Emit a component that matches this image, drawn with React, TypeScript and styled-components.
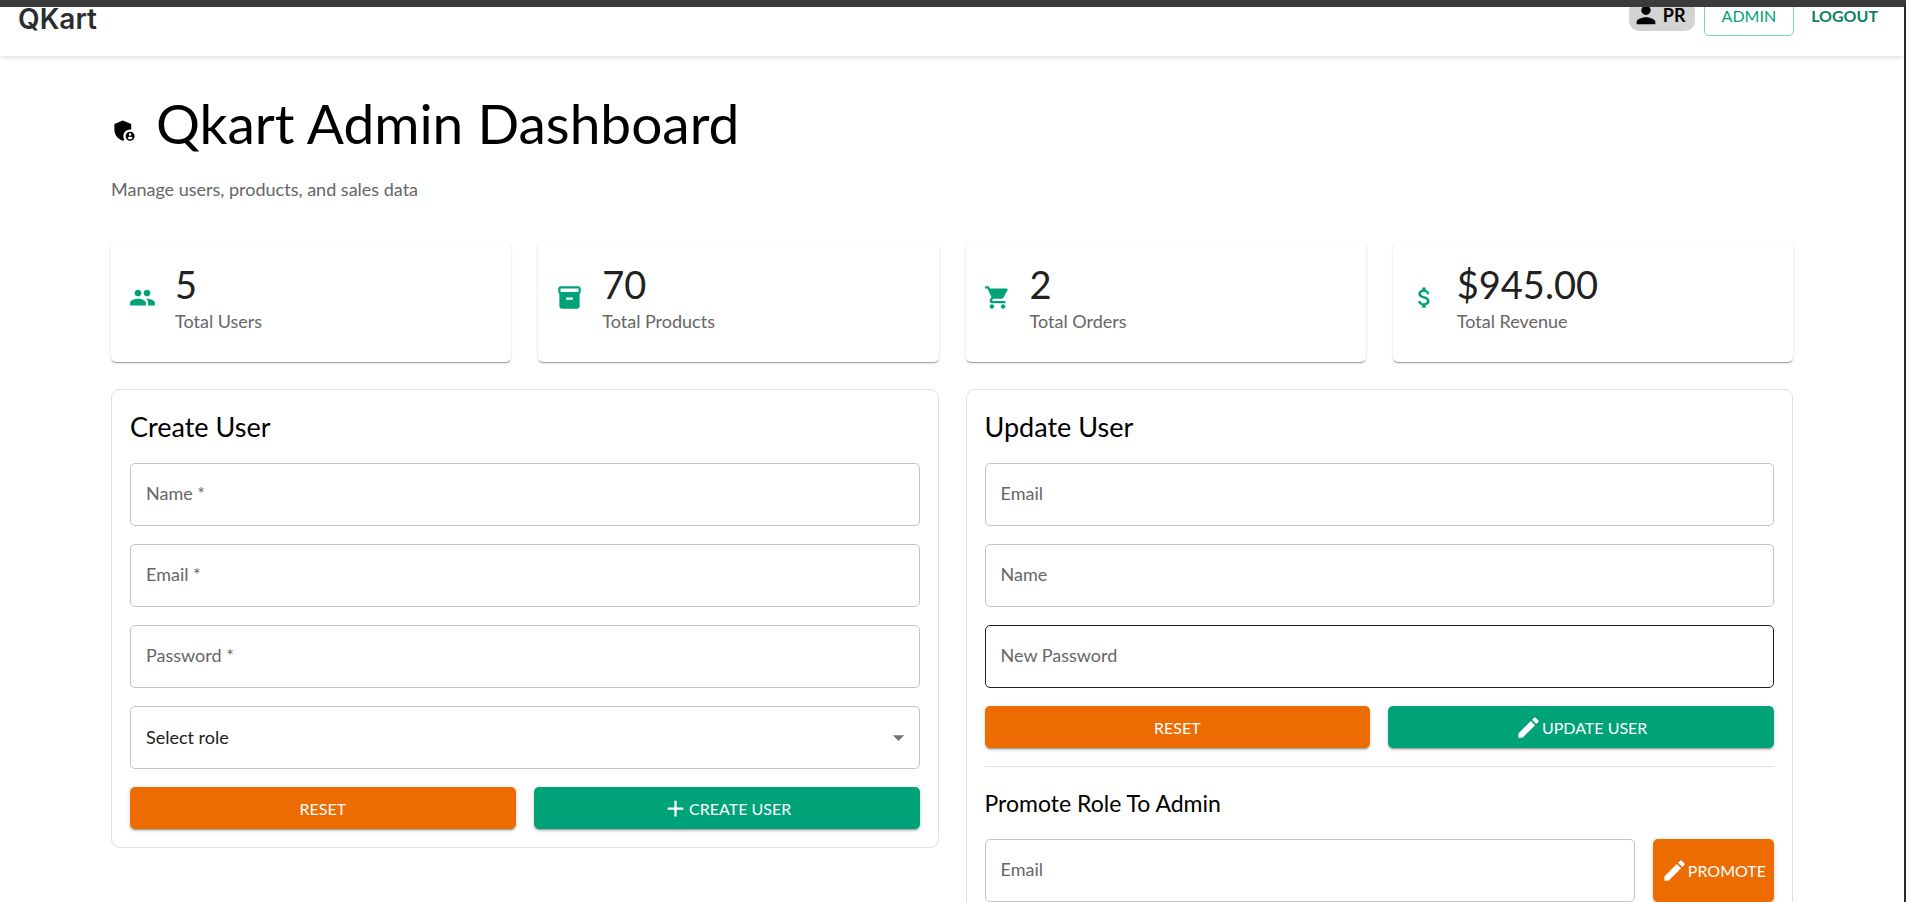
import React, { useId } from "react";
import styled, { createGlobalStyle } from "styled-components";
import type { IconType } from "react-icons";
import {
  MdAdd,
  MdAdminPanelSettings,
  MdArrowDropDown,
  MdAttachMoney,
  MdEdit,
  MdInventory2,
  MdPeople,
  MdPerson,
  MdShoppingCart,
} from "react-icons/md";

const green = "#00a278";
const orange = "#ed6c02";

const GlobalStyle = createGlobalStyle`
  *, *::before, *::after { box-sizing: border-box; }
  body {
    margin: 0;
    background: #fff;
    color: #000;
    font-family: Lato, "Liberation Sans", sans-serif;
    font-size: 18px;
    line-height: 27px;
  }
  h1, h2, h3, p { margin: 0; font-weight: 400; }
  button, input, select { font: inherit; margin: 0; }
  svg { flex: none; display: block; }
`;

const Viewport = styled.div`
  height: 100vh;
  overflow: hidden;
  border-top: 7px solid #3b3b3b;
  border-right: 2px solid #2b2b2b;
`;

/* The page is scrolled a little, so the header starts above the viewport. */
const Header = styled.header`
  display: flex;
  align-items: center;
  justify-content: space-between;
  height: 80px;
  margin-top: -31px;
  padding: 0 18px 2px;
  box-shadow: 0 1px 5px rgba(0, 0, 0, 0.16);
`;

const Logo = styled.a`
  padding-top: 8px;
  color: #2a2d31;
  font-family: Inter, sans-serif;
  font-size: 28px;
  font-weight: 600;
  text-decoration: none;
`;

const HeaderActions = styled.div`
  display: flex;
  align-items: center;
  gap: 9px;
`;

const UserChip = styled.div`
  display: flex;
  align-items: center;
  gap: 3px;
  height: 31px;
  padding: 0 9px 0 3px;
  border-radius: 10px;
  background: #d3d3d3;
  font-weight: 700;
`;

const HeaderButton = styled.button<{ $outlined?: boolean }>`
  height: 42px;
  padding: 0 ${(p) => (p.$outlined ? 17 : 8)}px;
  border: ${(p) => (p.$outlined ? "1px solid #7fd0bb" : "0")};
  border-radius: 5px;
  background: transparent;
  color: ${(p) => (p.$outlined ? green : "#0b8361")};
  font-size: 16px;
  font-weight: ${(p) => (p.$outlined ? 400 : 700)};
  text-transform: uppercase;
`;

const Main = styled.main`
  display: flex;
  flex-direction: column;
  gap: 27px;
  width: calc(100% - 54px);
  max-width: 1682px;
  margin: 0 auto;
  padding-top: 36px;
`;

const Intro = styled.div`
  display: flex;
  flex-direction: column;
  gap: 21px;
  padding-bottom: 12px;
`;

const PageTitle = styled.h1`
  display: flex;
  align-items: baseline;
  gap: 18px;
  font-size: 55px;
  line-height: 63px;
`;

const Muted = styled.p`
  color: #666;
`;

const Stats = styled.section`
  display: grid;
  grid-template-columns: repeat(4, 1fr);
  gap: 27px;
`;

const StatCard = styled.article`
  display: flex;
  align-items: center;
  gap: 19px;
  padding: 18px 18px 27px;
  border-radius: 5px;
  box-shadow: 0 2px 1px -1px rgba(0, 0, 0, 0.2), 0 1px 1px rgba(0, 0, 0, 0.14),
    0 1px 3px rgba(0, 0, 0, 0.12);
`;

const StatValue = styled.p`
  color: #212121;
  font-size: 38px;
  line-height: 48px;
`;

const Panels = styled.div`
  display: grid;
  grid-template-columns: 1fr 1fr;
  align-items: start;
  gap: 27px;
`;

const Panel = styled.section`
  display: flex;
  flex-direction: column;
  gap: 18px;
  padding: 18px;
  border: 1px solid #e0e0e0;
  border-radius: 9px;
`;

const PanelTitle = styled.h2`
  font-size: 27px;
  line-height: 37px;
`;

const SubTitle = styled.h3`
  font-size: 23px;
  line-height: 36px;
`;

const FieldBox = styled.div`
  position: relative;
  flex: 1;
  color: #212121;
`;

const FieldLabel = styled.label`
  position: absolute;
  top: 17px;
  left: 16px;
  color: #666;
  line-height: 26px;
  pointer-events: none;
`;

const Input = styled.input<{ $active?: boolean }>`
  display: block;
  width: 100%;
  height: 63px;
  padding: 0 15px;
  border: 1px solid ${(p) => (p.$active ? "#212121" : "#c4c4c4")};
  border-radius: 5px;
  outline: 0;
  background: transparent;
  color: inherit;
`;

const Select = styled.select`
  display: block;
  width: 100%;
  height: 63px;
  padding: 0 40px 0 15px;
  border: 1px solid #c4c4c4;
  border-radius: 5px;
  appearance: none;
  background: transparent;
  color: inherit;
`;

const SelectArrow = styled(MdArrowDropDown)`
  position: absolute;
  top: 18px;
  right: 8px;
  color: #757575;
  pointer-events: none;
`;

const Row = styled.div`
  display: flex;
  gap: 18px;
`;

const Button = styled.button<{ $tone: string; $compact?: boolean }>`
  display: flex;
  align-items: center;
  justify-content: center;
  flex: ${(p) => (p.$compact ? "none" : "1")};
  min-height: 42px;
  padding: 0 8px;
  border: 0;
  border-radius: 5px;
  background: ${(p) => p.$tone};
  color: #fff;
  font-size: 16px;
  text-transform: uppercase;
  box-shadow: 0 3px 1px -2px rgba(0, 0, 0, 0.2), 0 2px 2px rgba(0, 0, 0, 0.14),
    0 1px 5px rgba(0, 0, 0, 0.12);
`;

const Divider = styled.hr`
  width: 100%;
  height: 1px;
  margin: 0;
  border: 0;
  background: #e0e0e0;
`;

function Field({ label, type = "text", required, active }: {
  label: string;
  type?: string;
  required?: boolean;
  active?: boolean;
}) {
  const id = useId();
  return (
    <FieldBox>
      <Input id={id} type={type} required={required} $active={active} />
      <FieldLabel htmlFor={id}>{required ? `${label} *` : label}</FieldLabel>
    </FieldBox>
  );
}

const stats: { icon: IconType; value: string; label: string }[] = [
  { icon: MdPeople, value: "5", label: "Total Users" },
  { icon: MdInventory2, value: "70", label: "Total Products" },
  { icon: MdShoppingCart, value: "2", label: "Total Orders" },
  { icon: MdAttachMoney, value: "$945.00", label: "Total Revenue" },
];

export default function App() {
  return (
    <Viewport>
      <GlobalStyle />
      <Header>
        <Logo href="#">QKart</Logo>
        <HeaderActions>
          <UserChip>
            <MdPerson size={28} />
            PR
          </UserChip>
          <HeaderButton type="button" $outlined>Admin</HeaderButton>
          <HeaderButton type="button">Logout</HeaderButton>
        </HeaderActions>
      </Header>

      <Main>
        <Intro>
          <PageTitle>
            <MdAdminPanelSettings size={27} />
            Qkart Admin Dashboard
          </PageTitle>
          <Muted>Manage users, products, and sales data</Muted>
        </Intro>

        <Stats>
          {stats.map(({ icon: Icon, value, label }) => (
            <StatCard key={label}>
              <Icon size={27} color={green} />
              <div>
                <StatValue>{value}</StatValue>
                <Muted>{label}</Muted>
              </div>
            </StatCard>
          ))}
        </Stats>

        <Panels>
          <Panel>
            <PanelTitle>Create User</PanelTitle>
            <Field label="Name" required />
            <Field label="Email" type="email" required />
            <Field label="Password" type="password" required />
            <FieldBox>
              <Select aria-label="Select role" defaultValue="">
                <option value="">Select role</option>
              </Select>
              <SelectArrow size={27} />
            </FieldBox>
            <Row>
              <Button type="button" $tone={orange}>Reset</Button>
              <Button type="button" $tone={green}>
                <MdAdd size={27} />
                Create User
              </Button>
            </Row>
          </Panel>

          <Panel>
            <PanelTitle>Update User</PanelTitle>
            <Field label="Email" type="email" />
            <Field label="Name" />
            <Field label="New Password" type="password" active />
            <Row>
              <Button type="button" $tone={orange}>Reset</Button>
              <Button type="button" $tone={green}>
                <MdEdit size={27} />
                Update User
              </Button>
            </Row>
            <Divider />
            <SubTitle>Promote Role To Admin</SubTitle>
            <Row>
              <Field label="Email" type="email" />
              <Button type="button" $tone={orange} $compact>
                <MdEdit size={27} />
                Promote
              </Button>
            </Row>
          </Panel>
        </Panels>
      </Main>
    </Viewport>
  );
}
